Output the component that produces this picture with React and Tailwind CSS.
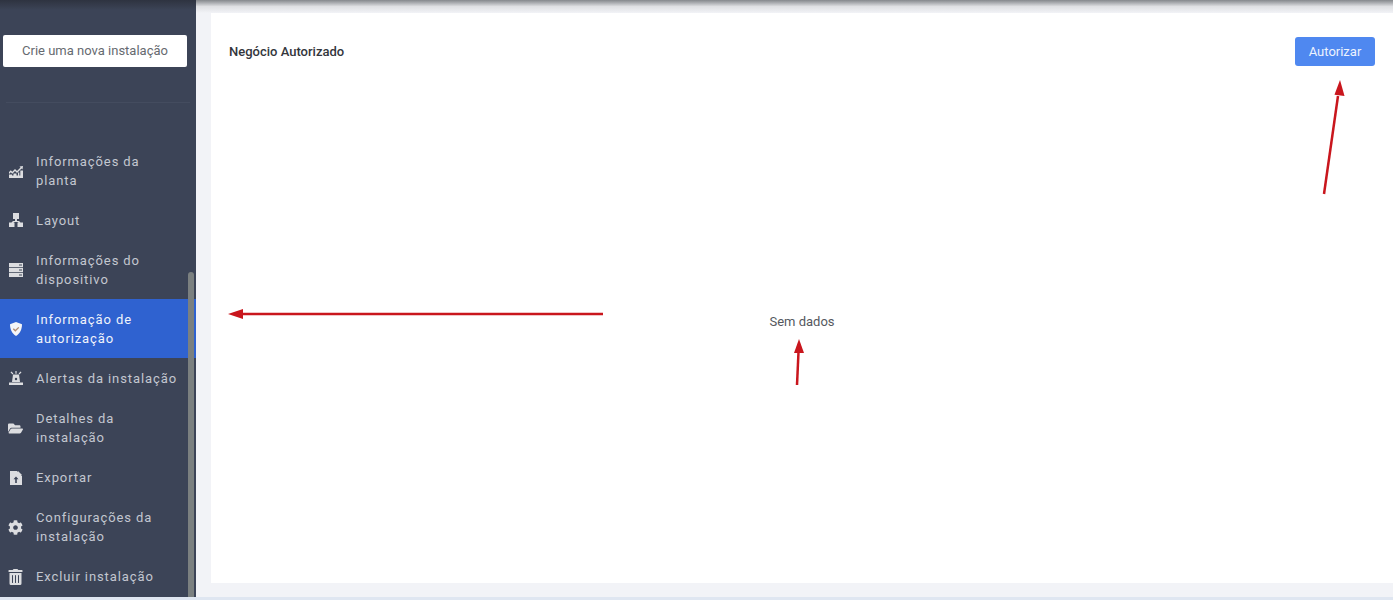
import React from "react";
import { FaCog, FaFolderOpen, FaTrashAlt } from "react-icons/fa";

const font = { fontFamily: "Roboto, 'Liberation Sans', sans-serif" };

const PlantIcon = () => (
  <svg viewBox="0 0 16 16" className="w-[16px] h-[16px] shrink-0" fill="currentColor">
    <path d="M1 9l1.800-1.800 1.500 1.500L7 6l2 2 3.500-3.500-1-1 3.500-.5-.5 3.500-1-1L9 10 7 8l-2.700 2.700-1.500-1.500L1 11z" />
    <path d="M1 15v-3.500h3v1h1.500V10.500h3v2H10V9.500h1.300v3h1v-5H15V15z" />
  </svg>
);

const LayoutIcon = () => (
  <svg viewBox="0 0 16 16" className="w-[16px] h-[16px] shrink-0" fill="currentColor">
    <path d="M5 1h6v6H9v2h2l1.500 1.500H15V15H9.500v-4.500h1L10 10H6l-.5.500h1V15H1v-4.500h2.500L5 9h2V7H5z" />
  </svg>
);

const ServerIcon = () => (
  <svg viewBox="0 0 16 16" className="w-[16px] h-[16px] shrink-0" fill="currentColor">
    <path fillRule="evenodd" d="M1 1h14v4.200H1zM11 2.500v1h3v-1zM1 6h14v4.200H1zM11 7.500v1h3v-1zM1 11h14v4H1zM11 12.500v1h3v-1z" />
  </svg>
);

const ShieldIcon = () => (
  <svg viewBox="0 0 16 16" className="w-[16px] h-[16px] shrink-0">
    <path d="M8 1l6 2.300c0 5-1.800 9.300-6 11.700C3.800 12.600 2 8.300 2 3.300z" fill="#f4f5f8" />
    <path d="M5.300 7.800l2 2 3.500-3.400" fill="none" stroke="#b08a70" strokeWidth="1.300" />
  </svg>
);

const AlarmIcon = () => (
  <svg viewBox="0 0 16 16" className="w-[16px] h-[16px] shrink-0" fill="currentColor">
    <path d="M5 4.500h6l1 7.500H4z" />
    <path d="M1 12.500h14V15H1z" />
    <path d="M7.400 1h1.200v2.800H7.400zM2.500 2.200l.9-.8 2 2.200-.9.800zM13.500 2.200l-.9-.8-2 2.200.9.800z" />
    <circle cx="8" cy="9" r="1.200" fill="#3c4457" />
  </svg>
);

const ExportIcon = () => (
  <svg viewBox="0 0 16 16" className="w-[16px] h-[16px] shrink-0" fill="currentColor">
    <path fillRule="evenodd" d="M2 1h7l5 5v9H2zM8 6.500L5.500 9.300h1.700V13h1.600V9.300h1.700z" />
    <path d="M10 1l4 4h-4z" />
  </svg>
);

const items = [
  { icon: <PlantIcon />, label: "Informações da planta" },
  { icon: <LayoutIcon />, label: "Layout" },
  { icon: <ServerIcon />, label: "Informações do dispositivo" },
  { icon: <ShieldIcon />, label: "Informação de autorização", active: true },
  { icon: <AlarmIcon />, label: "Alertas da instalação" },
  { icon: <FaFolderOpen size={15} />, label: "Detalhes da instalação" },
  { icon: <ExportIcon />, label: "Exportar" },
  { icon: <FaCog size={15} />, label: "Configurações da instalação" },
  { icon: <FaTrashAlt size={16} />, label: "Excluir instalação" },
];

const MenuItem = ({ icon, label, active }) => (
  <div
    className={`flex items-center pl-[8px] pr-[14px] py-[10.55px] text-[13px] leading-[19px] tracking-[0.9px] ${
      active ? "bg-[#2f62d0] text-[#f0f3fb]" : "text-[#c3c7d0]"
    }`}
  >
    <span className={`flex w-[15px] justify-center shrink-0 mr-[13px] ${active ? "text-[#f4f5f8]" : "text-[#dcdde0]"}`}>
      {icon}
    </span>
    <span>{label}</span>
  </div>
);

const App = () => {
  return (
    <div className="relative w-[1393px] h-[600px] overflow-hidden flex flex-col bg-[#f2f3f7]" style={font}>
      <div className="flex flex-1 min-h-0">
        <aside className="relative w-[196px] shrink-0 bg-[#3c4457] flex flex-col overflow-hidden">
          <div className="h-[10px] shrink-0 bg-gradient-to-b from-[#2e3340] to-[#3c4457]" />
          <div className="pl-[3px] pr-[9px] pt-[25px] shrink-0">
            <button className="w-full h-[32px] bg-white rounded-[2px] text-[13px] text-[#666a70]">
              Crie uma nova instalação
            </button>
          </div>
          <div className="mt-[35px] mx-[6px] border-t border-[#444c5f] shrink-0" />
          <nav className="mt-[38px] shrink-0">
            {items.map((item) => (
              <MenuItem key={item.label} {...item} />
            ))}
          </nav>
          <div className="absolute right-[2px] top-[272px] bottom-0 w-[6px] rounded-t-[3px] bg-[#7b8080]" />
        </aside>

        <main className="flex-1 min-w-0 flex flex-col">
          <div className="h-[13px] shrink-0 bg-gradient-to-b from-[#85888c] via-[#dfe0e3] to-[#f2f3f7]" />
          <div className="ml-[15px] h-[570px] shrink-0 bg-white flex flex-col pt-[24px] pb-[5px]">
            <div className="flex items-center justify-between pl-[18px] pr-[18px]">
              <h2 className="text-[13px] font-medium text-[#33363c]">Negócio Autorizado</h2>
              <button className="w-[80px] h-[29px] rounded-[3px] bg-[#4f88f0] text-[13px] text-[#edf3fe]">
                Autorizar
              </button>
            </div>
            <div className="flex-1 flex items-center justify-center text-[13px] text-[#55585e]">Sem dados</div>
          </div>
        </main>
      </div>
      <div className="h-[3px] shrink-0 bg-[#dfe6f1]" />

      {/* annotation arrows drawn over the screenshot */}
      <svg className="absolute inset-0 w-full h-full pointer-events-none" viewBox="0 0 1393 600">
        <g stroke="#c9161d" strokeWidth="2.500" fill="none">
          <path d="M603 314H240" />
          <path d="M1324 194L1338 96" />
          <path d="M797 385L798.500 352" />
        </g>
        <g fill="#c9161d">
          <path d="M228 314l15-5v10z" />
          <path d="M1340 80l4.500 16-10-1.300z" />
          <path d="M799 339l5 14h-10z" />
        </g>
      </svg>
    </div>
  );
};

export default App;
